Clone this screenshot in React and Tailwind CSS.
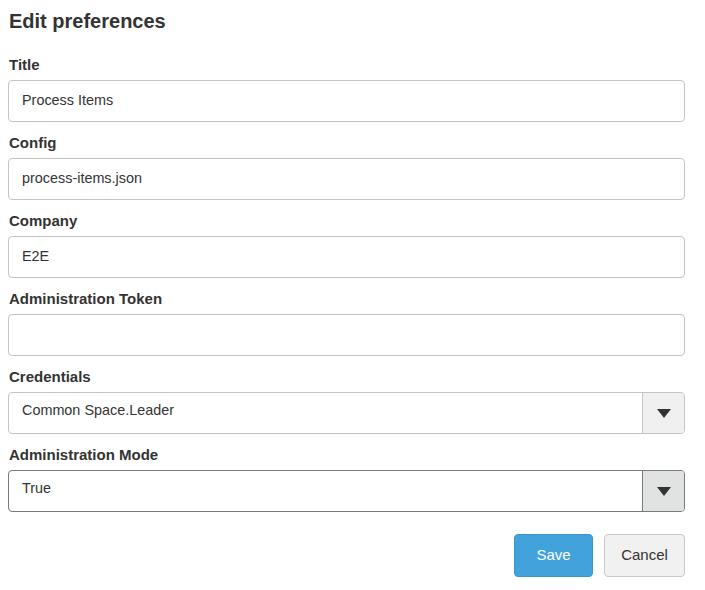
import clsx from "clsx";

const fields = [
  { label: "Title", value: "Process Items" },
  { label: "Config", value: "process-items.json" },
  { label: "Company", value: "E2E" },
  { label: "Administration Token", value: "" },
];

function Caret() {
  return (
    <svg width="14" height="9" viewBox="0 0 14 9">
      <path d="M0 0h14L7 9z" fill="#333" />
    </svg>
  );
}

function Select({ value, focused }) {
  return (
    <div
      className={clsx(
        "flex h-[42px] rounded-[4px] border bg-white",
        focused ? "border-[#7a7a7a]" : "border-[#c4c4c4]"
      )}
    >
      <div className="flex flex-1 items-center px-[13px] pb-[4px] text-[14.4px] text-[#333]">{value}</div>
      <div
        className={clsx(
          "flex w-[42px] items-center justify-center rounded-r-[3px] border-l",
          focused ? "border-[#7a7a7a] bg-[#e1e3e3]" : "border-[#c4c4c4] bg-[#f0f0f0]"
        )}
      >
        <Caret />
      </div>
    </div>
  );
}

export default function App() {
  return (
    <div
      className="min-h-[590px] w-[705px] bg-white pl-[8px] pt-[7px] text-[#333]"
      style={{ fontFamily: '"Liberation Sans", Arial, sans-serif' }}
    >
      <div className="w-[677px]">
        <h1 className="mb-[20px] pl-[1px] text-[20px] font-bold leading-[28px]">Edit preferences</h1>

        {fields.map((f) => (
          <div key={f.label} className="mb-[11px]">
            <label className="mb-[5px] block pl-[1px] text-[15px] font-bold leading-[20px]">{f.label}</label>
            <div className="flex h-[42px] items-center rounded-[4px] border border-[#c4c4c4] bg-white px-[13px] text-[14.4px]">
              {f.value}
            </div>
          </div>
        ))}

        <div className="mb-[11px]">
          <label className="mb-[5px] block pl-[1px] text-[15px] font-bold leading-[20px]">Credentials</label>
          <Select value="Common Space.Leader" />
        </div>

        <div>
          <label className="mb-[5px] block pl-[1px] text-[15px] font-bold leading-[20px]">Administration Mode</label>
          <Select value="True" focused />
        </div>

        <div className="mt-[22px] flex justify-end gap-[11px]">
          <button className="h-[43px] w-[79px] rounded-[4px] border border-[#3996cc] bg-[#42a3dc] text-[15px] text-white">
            Save
          </button>
          <button className="h-[43px] w-[81px] rounded-[4px] border border-[#c8c8c8] bg-[#f1f1f1] text-[15px] text-[#333]">
            Cancel
          </button>
        </div>
      </div>
    </div>
  );
}
